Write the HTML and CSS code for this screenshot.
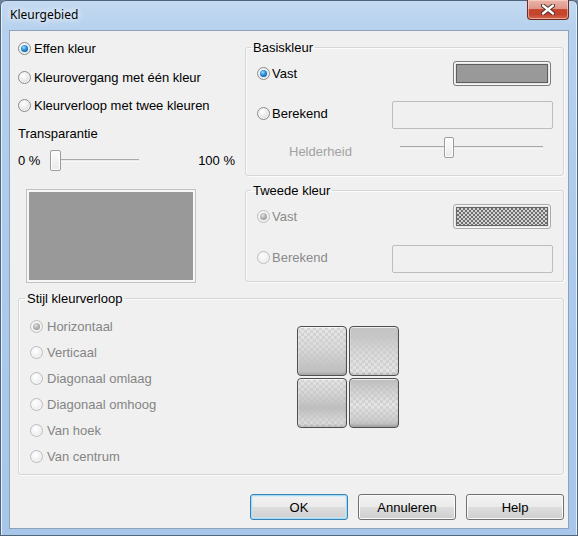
FILE: index.html
```html
<!DOCTYPE html>
<html lang="nl">
<head>
<meta charset="utf-8">
<title>Kleurgebied</title>
<link rel="stylesheet" href="styles.css">
</head>
<body>
<div class="window">
  <div class="titlebar">
    <span class="title">Kleurgebied</span>
    <div class="close">
      <svg width="14" height="11" viewBox="0 0 14 11">
        <path d="M2 1.5 L12 9.5 M12 1.5 L2 9.5" stroke="#4a2a22" stroke-width="4.2" stroke-linecap="round" fill="none"/>
        <path d="M2 1.5 L12 9.5 M12 1.5 L2 9.5" stroke="#ffffff" stroke-width="2.4" stroke-linecap="round" fill="none"/>
      </svg>
    </div>
  </div>
  <div class="client">
    <div class="top">
      <div class="left">
        <label class="opt first"><span class="radio on"></span>Effen kleur</label>
        <label class="opt"><span class="radio"></span>Kleurovergang met één kleur</label>
        <label class="opt"><span class="radio"></span>Kleurverloop met twee kleuren</label>
        <div class="caption">Transparantie</div>
        <div class="trans-row">
          <span class="pct0">0 %</span>
          <div class="slider s-trans"><span class="thumb"></span></div>
          <span class="pct100">100 %</span>
        </div>
        <div class="preview"><div class="preview-fill"></div></div>
      </div>
      <div class="right">
        <fieldset class="group">
          <legend>Basiskleur</legend>
          <div class="gbody basis">
            <div class="row1">
              <label class="ropt"><span class="radio on"></span>Vast</label>
              <div class="swatch"><div class="swatch-fill"></div></div>
            </div>
            <div class="row2">
              <label class="ropt lower"><span class="radio"></span>Berekend</label>
              <div class="textbox"></div>
            </div>
            <div class="row3">
              <span class="helder">Helderheid</span>
              <div class="slider s-helder"><span class="thumb"></span></div>
            </div>
          </div>
        </fieldset>
        <fieldset class="group second">
          <legend>Tweede kleur</legend>
          <div class="gbody tweede">
            <div class="row1">
              <label class="ropt dis"><span class="radio dis on"></span>Vast</label>
              <div class="swatch dis"><div class="swatch-fill checker"></div></div>
            </div>
            <div class="row2 r2b">
              <label class="ropt lower dis"><span class="radio dis"></span>Berekend</label>
              <div class="textbox"></div>
            </div>
          </div>
        </fieldset>
      </div>
    </div>
    <fieldset class="group stijl">
      <legend>Stijl kleurverloop</legend>
      <div class="gbody stijl-body">
        <div class="stijl-list">
          <label class="sopt"><span class="radio dis on"></span>Horizontaal</label>
          <label class="sopt"><span class="radio dis"></span>Verticaal</label>
          <label class="sopt"><span class="radio dis"></span>Diagonaal omlaag</label>
          <label class="sopt"><span class="radio dis"></span>Diagonaal omhoog</label>
          <label class="sopt"><span class="radio dis"></span>Van hoek</label>
          <label class="sopt"><span class="radio dis"></span>Van centrum</label>
        </div>
        <div class="tiles">
          <div class="tile t1"></div>
          <div class="tile t2"></div>
          <div class="tile t3"></div>
          <div class="tile t4"></div>
        </div>
      </div>
    </fieldset>
    <div class="buttons">
      <button class="btn default">OK</button>
      <button class="btn">Annuleren</button>
      <button class="btn">Help</button>
    </div>
  </div>
</div>
</body>
</html>
```
FILE: styles.css
```css
html, body {
  margin: 0;
  padding: 0;
  background: #6f8196;
}
body {
  font-family: "Liberation Sans", Arial, sans-serif;
  font-size: 13px;
  color: #000;
}
.window {
  width: 578px;
  height: 536px;
  box-sizing: border-box;
  display: flex;
  flex-direction: column;
  padding: 0 9px 7px 9px;
  background: linear-gradient(180deg, #c4daf1 0px, #b6d1ee 30px, #aecbec 200px, #a7c6ea 536px);
  border-radius: 6px 6px 0 0;
  box-shadow: inset 1px 0 0 #50657c, inset -1px 0 0 #50657c, inset 0 1px 0 #50657c, inset 0 -1px 0 #50657c, inset 2px 0 0 #e4f0fb, inset -2px 0 0 #e4f0fb;
}
.titlebar {
  height: 30px;
  display: flex;
  align-items: flex-start;
  margin: 0 -9px;
  padding-left: 10px;
}
.title {
  font-family: "Noto Sans", "Liberation Sans", sans-serif;
  font-size: 12px;
  line-height: 16px;
  margin-top: 7px;
  color: #000;
  text-shadow: 0 0 6px rgba(255,255,255,0.95), 0 0 10px rgba(255,255,255,0.8);
}
.close {
  margin-left: auto;
  margin-right: 9px;
  width: 42px;
  height: 20px;
  box-sizing: border-box;
  border: 1px solid #6b2b20;
  border-top: none;
  border-radius: 0 0 4px 4px;
  background: linear-gradient(180deg, #eab4a8 0%, #e0958a 45%, #c8472f 50%, #c4432c 75%, #d5694f 100%);
  box-shadow: inset 0 0 0 1px rgba(255,220,210,0.55);
  display: flex;
  align-items: center;
  justify-content: center;
}
.close svg { display: block; }
.client {
  height: 499px;
  box-sizing: border-box;
  border: 1px solid #8ea3bb;
  background: #f0f0f0;
  padding: 3px 4px 0 8px;
  display: flex;
  flex-direction: column;
}
.top {
  display: grid;
  grid-template-columns: 227px 1fr;
  align-items: start;
}
.left {
  display: flex;
  flex-direction: column;
}
.opt {
  height: 28px;
  display: flex;
  align-items: center;
  gap: 3px;
}
.opt.first { height: 29px; }
.caption {
  height: 28px;
  display: flex;
  align-items: center;
}
.trans-row {
  margin-top: 3px;
  height: 21px;
  display: flex;
  align-items: center;
}
.pct0 { width: 32px; }
.pct100 { margin-left: auto; margin-right: 10px; }
.slider {
  height: 21px;
  display: flex;
  background-image: linear-gradient(180deg, transparent 0, transparent 9px, #a9a9a9 9px, #a9a9a9 10px, #e2e2e2 10px, #ffffff 12px, transparent 12px);
  background-repeat: no-repeat;
}
.s-trans {
  width: 89px;
  background-position: 2px 0;
  background-size: 87px 21px;
}
.thumb {
  width: 11px;
  height: 21px;
  box-sizing: border-box;
  border: 1px solid #9c9c9c;
  border-radius: 2px;
  background: linear-gradient(180deg, #fdfdfd, #eaeaea);
  box-shadow: inset 0 0 0 1px #ffffff;
}
.preview {
  margin-top: 18px;
  margin-left: 8px;
  width: 170px;
  height: 94px;
  box-sizing: border-box;
  border: 1px solid #c2c2c2;
  padding: 2px;
  background: #f7f7f7;
}
.preview-fill {
  height: 100%;
  background: #999999;
}
.right {
  margin-top: 6px;
  display: flex;
  flex-direction: column;
}
.group {
  margin: 0;
  padding: 0;
  min-width: 0;
  border: 1px solid #d2d7db;
  border-radius: 3px;
  box-shadow: 1px 1px 0 #fcfcfc, inset 1px 1px 0 #fcfcfc;
}
.group legend {
  padding: 0 2px;
  margin-left: 5px;
  line-height: 15px;
  font-size: 13px;
}
.second { margin-top: 7px; }
.gbody.basis { padding: 6px 10px 17px 11px; }
.gbody.tweede { padding: 6px 10px 8px 11px; }
.row1 {
  height: 25px;
  display: flex;
  align-items: center;
  justify-content: space-between;
}
.row2 {
  margin-top: 15px;
  height: 28px;
  display: flex;
  justify-content: space-between;
}
.row2.r2b { margin-top: 16px; }
.ropt {
  display: flex;
  align-items: center;
  gap: 2px;
  line-height: 15px;
}
.ropt.lower {
  align-self: flex-start;
  margin-top: 5px;
}
.ropt.dis { color: #8a8a8a; }
.swatch {
  width: 98px;
  height: 25px;
  margin-right: 2px;
  box-sizing: border-box;
  border: 1px solid #7c7c7c;
  border-radius: 3px;
  padding: 2px;
  background: #e6e6e6;
  box-shadow: inset 0 0 0 1px #f6f6f6;
}
.swatch.dis { border-color: #ababab; }
.swatch-fill {
  height: 100%;
  box-sizing: border-box;
  border: 1px solid #5e5e5e;
  background: #999999;
}
.swatch-fill.checker {
  border-color: #666666;
  background-color: #cfcfcf;
  background-image: repeating-conic-gradient(#6f6f6f 0 25%, #d2d2d2 0 50%);
  background-size: 4px 4px;
}
.textbox {
  width: 161px;
  height: 28px;
  box-sizing: border-box;
  border: 1px solid #bdbdbd;
  border-radius: 2px;
  background: #f0f0f0;
}
.row3 {
  margin-top: 8px;
  height: 21px;
  display: flex;
}
.helder {
  color: #a2a2a2;
  margin-left: 32px;
  margin-top: 7px;
  line-height: 15px;
}
.s-helder {
  width: 143px;
  margin-left: auto;
  margin-right: 10px;
  background-size: 143px 21px;
}
.s-helder .thumb {
  width: 10px;
  margin-left: 44px;
}
.stijl { margin-top: 8px; }
.stijl legend { margin-left: 6px; }
.gbody.stijl-body {
  padding: 7px 0 5px 11px;
  display: flex;
  align-items: flex-start;
}
.stijl-list {
  width: 267px;
  display: flex;
  flex-direction: column;
}
.sopt {
  height: 26px;
  display: flex;
  align-items: center;
  gap: 4px;
  color: #858585;
}
.radio {
  flex: none;
  display: inline-block;
  width: 13px;
  height: 13px;
  box-sizing: border-box;
  border-radius: 50%;
  border: 1px solid #8b8b8b;
  background: radial-gradient(circle at 40% 35%, #ffffff 0, #ececec 45%, #cdcdcd 100%);
  box-shadow: inset 0 0 0 1px #f4f4f4;
  position: relative;
}
.radio.on::after {
  content: "";
  position: absolute;
  left: 2px;
  top: 2px;
  width: 7px;
  height: 7px;
  border-radius: 50%;
  background: radial-gradient(circle at 40% 35%, #9fe0ff 0, #2c93e0 40%, #0b5aa3 80%, #083d73 100%);
}
.radio.dis {
  border-color: #bcbcbc;
  background: radial-gradient(circle at 40% 35%, #ffffff 0, #f2f2f2 50%, #e2e2e2 100%);
}
.radio.dis.on::after {
  background: radial-gradient(circle at 40% 35%, #e4e4e4 0, #b2b2b2 45%, #8e8e8e 100%);
}
.tiles {
  margin-top: 13px;
  display: grid;
  grid-template-columns: 50px 50px;
  grid-auto-rows: 50px;
  gap: 2px;
}
.tile {
  box-sizing: border-box;
  border: 1px solid #4f4f4f;
  border-radius: 4px;
  background-color: #d8d8d8;
  background-size: 100% 100%, 6px 6px;
  box-shadow: inset 0 1px 0 rgba(255,255,255,0.7), inset 0 -2px 2px rgba(0,0,0,0.12), inset 1px 0 0 rgba(255,255,255,0.4);
}
.t1 {
  background-image: linear-gradient(180deg, rgba(196,196,196,0) 0%, rgba(196,196,196,0.3) 40%, #c2c2c2 85%, #bdbdbd 100%), repeating-conic-gradient(#d4d4d4 0 25%, #e6e6e6 0 50%);
}
.t2 {
  background-image: linear-gradient(180deg, #c4c4c4 0%, #c6c6c6 20%, rgba(198,198,198,0.3) 60%, rgba(198,198,198,0) 100%), repeating-conic-gradient(#d4d4d4 0 25%, #e6e6e6 0 50%);
}
.t3 {
  background-image: linear-gradient(180deg, rgba(190,190,190,0) 0%, rgba(190,190,190,0.4) 30%, #bebebe 60%, rgba(190,190,190,0.4) 85%, rgba(190,190,190,0.2) 100%), repeating-conic-gradient(#d4d4d4 0 25%, #e6e6e6 0 50%);
}
.t4 {
  background-image: linear-gradient(180deg, #bdbdbd 0%, rgba(190,190,190,0.5) 25%, rgba(190,190,190,0) 55%, rgba(190,190,190,0.6) 85%, #b8b8b8 100%), repeating-conic-gradient(#d4d4d4 0 25%, #e6e6e6 0 50%);
}
.buttons {
  margin-top: 19px;
  display: flex;
  justify-content: flex-end;
  gap: 10px;
}
.btn {
  width: 98px;
  height: 26px;
  margin: 0;
  padding: 0;
  box-sizing: border-box;
  border: 1px solid #707070;
  border-radius: 3px;
  background: linear-gradient(180deg, #f2f2f2 0%, #ebebeb 48%, #dddddd 52%, #cfcfcf 100%);
  box-shadow: inset 0 0 0 1px #fbfbfb;
  font-family: "Liberation Sans", Arial, sans-serif;
  font-size: 13px;
  color: #000;
}
.btn.default {
  border-color: #3c7fb1;
  box-shadow: inset 0 0 0 1px #9fdcf8, inset 0 0 0 2px rgba(200,235,252,0.6);
}
```
